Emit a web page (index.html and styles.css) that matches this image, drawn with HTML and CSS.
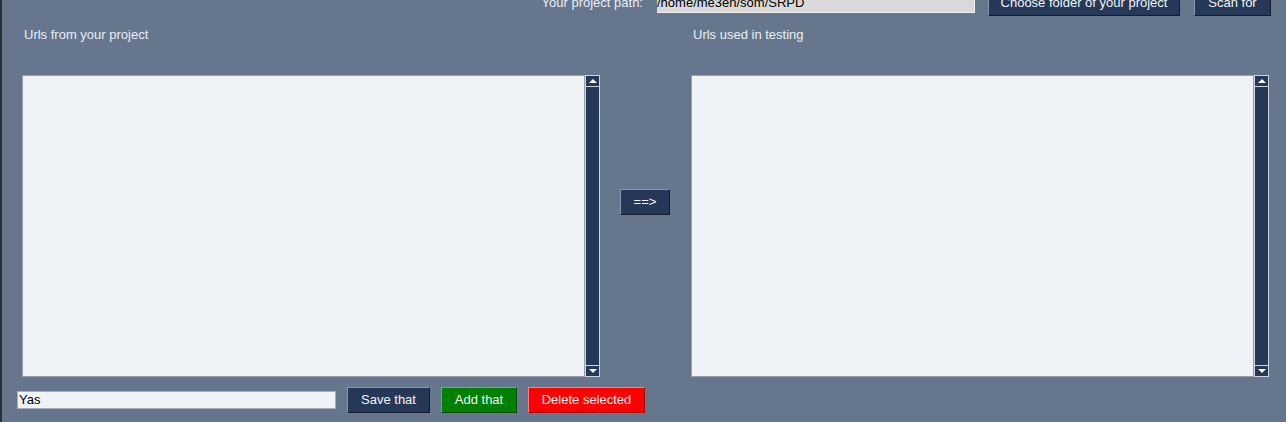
FILE: index.html
```html
<!DOCTYPE html>
<html>
<head>
<meta charset="utf-8">
<link rel="stylesheet" href="styles.css">
</head>
<body>
<div class="topbar">
  <span class="path-label">Your project path:</span>
  <div class="path-entry">/home/me3en/som/SRPD</div>
  <button class="btn btn-dark btn-choose">Choose folder of your project</button>
  <button class="btn btn-dark btn-scan">Scan for</button>
</div>
<div class="main">
  <div class="panel-label">Urls from your project</div>
  <div></div>
  <div class="panel-label">Urls used in testing</div>
  <div class="listwrap">
    <div class="listbox"></div>
    <div class="scrollbar">
      <div class="sb-btn sb-up"><span class="tri-up"></span></div>
      <div class="sb-trough"></div>
      <div class="sb-btn sb-down"><span class="tri-down"></span></div>
    </div>
  </div>
  <div class="middle">
    <button class="btn btn-dark btn-move">==&gt;</button>
  </div>
  <div class="listwrap">
    <div class="listbox"></div>
    <div class="scrollbar">
      <div class="sb-btn sb-up"><span class="tri-up"></span></div>
      <div class="sb-trough"></div>
      <div class="sb-btn sb-down"><span class="tri-down"></span></div>
    </div>
  </div>
</div>
<div class="bottombar">
  <div class="entry">Yas</div>
  <button class="btn btn-dark btn-save">Save that</button>
  <button class="btn btn-green btn-add">Add that</button>
  <button class="btn btn-red btn-delete">Delete selected</button>
</div>
</body>
</html>
```

FILE: styles.css
```css
html, body {
  margin: 0;
  padding: 0;
}
body {
  width: 1286px;
  height: 422px;
  overflow: hidden;
  background: #66768c;
  border-left: 2px solid #2c2f37;
  box-sizing: border-box;
  font-family: "Liberation Sans", Arial, sans-serif;
  font-size: 13px;
  color: #e8eef5;
}

.topbar {
  display: flex;
  justify-content: flex-end;
  align-items: center;
  height: 26px;
  margin-top: -10px;
  padding-right: 15px;
}
.path-label {
  color: #e8eef5;
  margin-right: 14px;
  line-height: 15px;
  margin-top: -1px;
}
.path-entry {
  width: 318px;
  height: 19px;
  box-sizing: border-box;
  background: #d9d9d9;
  border-right: 1px solid #eeeeee;
  border-bottom: 1px solid #eeeeee;
  color: #000;
  line-height: 17px;
  padding-left: 0;
  margin-right: 13px;
}
.btn {
  font-family: "Liberation Sans", Arial, sans-serif;
  font-size: 13px;
  color: #f2f4f7;
  height: 26px;
  box-sizing: border-box;
  padding: 0 0 2px 0;
  margin: 0;
  border: 1px solid;
  display: flex;
  align-items: center;
  justify-content: center;
  line-height: 15px;
}
.btn-dark {
  background: #253858;
  border-color: #8796ad #151d2c #151d2c #8796ad;
}
.btn-green {
  background: #008000;
  border-color: #5cb85c #004c00 #004c00 #5cb85c;
}
.btn-red {
  background: #ff0000;
  border-color: #ff8080 #a80000 #a80000 #ff8080;
}
.btn-choose {
  width: 192px;
  margin-right: 14px;
}
.btn-scan {
  width: 77px;
}

.main {
  display: grid;
  grid-template-columns: 578px 91px 578px;
  grid-template-rows: 48px 302px;
  margin-left: 20px;
  margin-top: 11px;
}
.panel-label {
  line-height: 15px;
  padding-left: 2px;
  color: #e8eef5;
}
.listwrap {
  display: flex;
}
.listbox {
  width: 563px;
  height: 302px;
  box-sizing: border-box;
  background: #eff2f7;
  border: 1px solid #9a9fa8;
}
.scrollbar {
  width: 15px;
  height: 302px;
  box-sizing: border-box;
  border: 1px solid #cdd4de;
  background: #253858;
  display: flex;
  flex-direction: column;
}
.sb-btn {
  height: 10px;
  flex: none;
  display: flex;
  align-items: center;
  justify-content: center;
}
.sb-up {
  border-bottom: 1px solid #cdd4de;
}
.sb-down {
  border-top: 1px solid #cdd4de;
}
.sb-trough {
  flex: 1;
}
.tri-up {
  width: 0;
  height: 0;
  border-left: 4px solid transparent;
  border-right: 4px solid transparent;
  border-bottom: 4px solid #ffffff;
}
.tri-down {
  width: 0;
  height: 0;
  border-left: 4px solid transparent;
  border-right: 4px solid transparent;
  border-top: 4px solid #ffffff;
}
.middle {
  display: flex;
  align-items: flex-start;
}
.btn-move {
  width: 50px;
  margin-left: 20px;
  margin-top: 114px;
}

.bottombar {
  display: flex;
  align-items: center;
  height: 26px;
  margin-top: 10px;
  margin-left: 15px;
}
.entry {
  width: 319px;
  height: 18px;
  box-sizing: border-box;
  background: #eff2f7;
  border: 1px solid #a9aeb6;
  color: #000;
  line-height: 15px;
  padding-left: 1px;
  margin-right: 11px;
}
.btn-save {
  width: 83px;
  margin-right: 11px;
}
.btn-add {
  width: 76px;
  margin-right: 11px;
}
.btn-delete {
  width: 117px;
}
```
